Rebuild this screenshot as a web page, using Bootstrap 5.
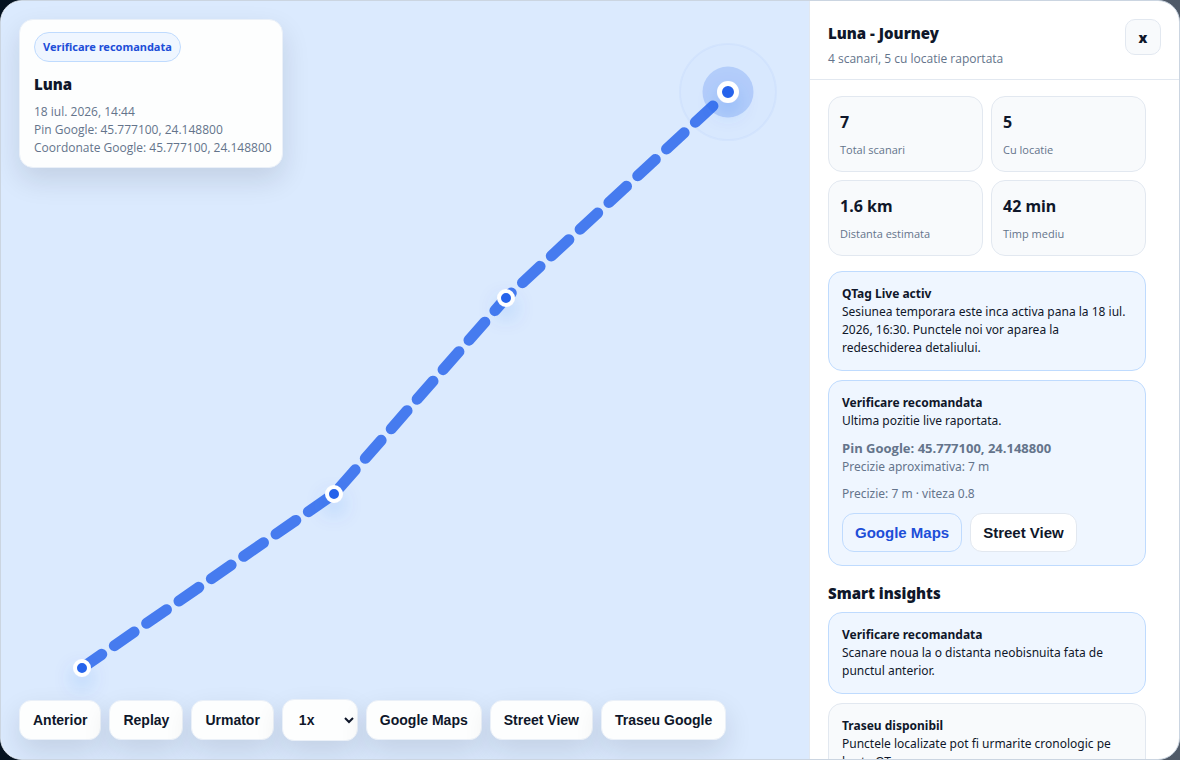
<!DOCTYPE html>
<html lang="ro">
<head>
<meta charset="utf-8">
<meta name="viewport" content="width=device-width, initial-scale=1">
<title>Luna - Journey</title>
<link href="https://cdn.jsdelivr.net/npm/bootstrap@5.3.0/dist/css/bootstrap.min.css" rel="stylesheet">
<style>
:root { --ink: #0f172a; --muted: #64748b; --line: #e2e8f0; --soft: #f8fafc; --blue-bg: #eff6ff; --blue-line: #bfdbfe; --blue: #1d4ed8; }
body { font-family: "Noto Sans", sans-serif; font-size: 12px; line-height: 18px; color: var(--ink); background: linear-gradient(90deg, #041220, #505a68); }
.shell { display: grid; grid-template-columns: minmax(0, 1fr) 370px; border: 1px solid #cbd5e1; border-radius: 22px; background: #fff; }
.map-pane { background: #dbeafe; }
.map-pane .route { inset: 0; }
.overlay-shadow { background: #fdfefe; border: 1px solid #eaf0f8; box-shadow: 0 12px 28px rgba(15, 23, 42, .12); }
.point-card { top: 18px; left: 18px; border-radius: 14px; padding: 12px 10px 10px 14px; }
.status-pill { background: var(--blue-bg); border: 1px solid var(--blue-line); color: var(--blue); border-radius: 99px; font-size: 11px; font-weight: 700; padding: 5px 8px; }
.heading { font-size: 15px; line-height: 22px; font-weight: 900; }
.point-card .heading { margin: 11px 0 8px; }
.side-head .heading { margin: 3px 0 6px; }
.compact { font-family: "Open Sans", sans-serif; }
.toolbar { left: 18px; right: 18px; bottom: 18px; }
.act { font-family: "Liberation Sans", sans-serif; font-weight: 700; font-size: 14px; line-height: 20px; color: var(--ink); border-radius: 12px; padding: 9px 12px; }
.toolbar .act { padding: 9px 13px; }
.toolbar select.act { width: 76px; height: 42px; padding: 0 0 0 12px; }
.side { border-left: 1px solid var(--line); }
.side-head { border-bottom: 1px solid var(--line); padding: 18px; height: 79px; }
.close-btn { width: 36px; height: 36px; border: 1px solid var(--line); border-radius: 10px; background: var(--soft); color: var(--ink); font-weight: 900; font-size: 14px; padding: 2px 0 0; }
.side-body { padding: 16px 33px 18px 18px; overflow: hidden auto; scrollbar-width: none; }
.side-body::-webkit-scrollbar { display: none; }
.stats { display: grid; grid-template-columns: 1fr 1fr; gap: 8px; }
.tile { background: var(--soft); border: 1px solid var(--line); border-radius: 14px; padding: 13px 11px 11px; height: 76px; }
.tile strong { font-size: 16px; line-height: 24px; font-weight: 700; display: block; }
.tile span { font-size: 11px; line-height: 16px; margin-top: 8px; display: block; }
.note { background: var(--soft); border: 1px solid var(--line); border-radius: 14px; padding: 13px; }
.stats + .note { margin-top: 15px; }
.note + .note, .note-line { margin-top: 9px; }
.note-blue { background: var(--blue-bg); border-color: var(--blue-line); }
.note-actions { margin-top: 10px; }
.pin-line { font-family: "Open Sans", sans-serif; font-size: 13px; }
.soft-text { color: var(--muted); }
.act-lg { font-size: 15px; line-height: 19px; background: #fff; border: 1px solid var(--line); }
.act-blue { background: var(--blue-bg); border-color: var(--blue-line); color: var(--blue); }
</style>
</head>
<body>
<main class="shell vh-100 overflow-hidden">
  <section class="map-pane position-relative" aria-label="Harta traseu">
    <svg class="route position-absolute w-100 h-100" viewBox="1 1 808 758" preserveAspectRatio="xMidYMid slice" aria-hidden="true">
      <defs><filter id="glow" x="-200%" y="-200%" width="500%" height="500%"><feDropShadow dx="0" dy="10" stdDeviation="10" flood-color="#2563eb" flood-opacity=".22"/></filter></defs>
      <polyline points="82,668 334,494 506,298 728,92" fill="none" stroke="#2563eb" stroke-opacity=".82" stroke-width="11" stroke-linecap="round" stroke-linejoin="round" stroke-dasharray="24 15.3"/>
      <circle cx="728" cy="92" r="48" fill="#2563eb" fill-opacity=".01" stroke="#2563eb" stroke-opacity=".04" stroke-width="2"/>
      <circle cx="728" cy="92" r="25.500" fill="#2563eb" fill-opacity=".2"/>
      <g fill="#2563eb" stroke="#fff" stroke-width="4" filter="url(#glow)">
        <circle cx="82" cy="668" r="7"/><circle cx="334" cy="494" r="7"/><circle cx="506" cy="298" r="7"/>
        <circle cx="728" cy="92" r="8.500" stroke-width="5"/>
      </g>
    </svg>
    <div class="point-card overlay-shadow position-absolute">
      <span class="status-pill d-inline-block">Verificare recomandata</span>
      <h2 class="heading">Luna</h2>
      <div class="soft-text compact">18 iul. 2026, 14:44<br>Pin Google: 45.777100, 24.148800<br>Coordonate Google: 45.777100, 24.148800</div>
    </div>
    <div class="toolbar position-absolute d-flex flex-wrap align-items-center gap-2">
      <button type="button" class="act overlay-shadow">Anterior</button>
      <button type="button" class="act overlay-shadow">Replay</button>
      <button type="button" class="act overlay-shadow">Urmator</button>
      <select class="act overlay-shadow" aria-label="Viteza"><option>1x</option><option>2x</option></select>
      <button type="button" class="act overlay-shadow">Google Maps</button>
      <button type="button" class="act overlay-shadow">Street View</button>
      <button type="button" class="act overlay-shadow">Traseu Google</button>
    </div>
  </section>
  <aside class="side d-flex flex-column overflow-hidden">
    <header class="side-head d-flex justify-content-between flex-shrink-0">
      <div>
        <h1 class="heading">Luna - Journey</h1>
        <div class="soft-text compact">4 scanari, 5 cu locatie raportata</div>
      </div>
      <button type="button" class="close-btn" aria-label="Inchide">x</button>
    </header>
    <div class="side-body flex-grow-1">
      <div class="stats">
        <div class="tile"><strong>7</strong><span class="soft-text compact">Total scanari</span></div>
        <div class="tile"><strong>5</strong><span class="soft-text compact">Cu locatie</span></div>
        <div class="tile"><strong>1.6 km</strong><span class="soft-text compact">Distanta estimata</span></div>
        <div class="tile"><strong>42 min</strong><span class="soft-text compact">Timp mediu</span></div>
      </div>
      <div class="note note-blue"><strong>QTag Live activ</strong><br>Sesiunea temporara este inca activa pana la 18 iul. 2026, 16:30. Punctele noi vor aparea la redeschiderea detaliului.</div>
      <div class="note note-blue">
        <strong>Verificare recomandata</strong><br>Ultima pozitie live raportata.
        <div class="soft-text note-line"><strong class="pin-line">Pin Google: 45.777100, 24.148800</strong><br>Precizie aproximativa: 7 m</div>
        <div class="soft-text note-line">Precizie: 7 m · viteza 0.8</div>
        <div class="note-actions d-flex gap-2">
          <button type="button" class="act act-lg act-blue">Google Maps</button>
          <button type="button" class="act act-lg">Street View</button>
        </div>
      </div>
      <h2 class="heading mt-3 mb-2">Smart insights</h2>
      <div class="note note-blue"><strong>Verificare recomandata</strong><br>Scanare noua la o distanta neobisnuita fata de punctul anterior.</div>
      <div class="note"><strong>Traseu disponibil</strong><br>Punctele localizate pot fi urmarite cronologic pe harta QTag.</div>
    </div>
  </aside>
</main>
<script src="https://cdn.jsdelivr.net/npm/bootstrap@5.3.0/dist/js/bootstrap.bundle.min.js"></script>
</body>
</html>
